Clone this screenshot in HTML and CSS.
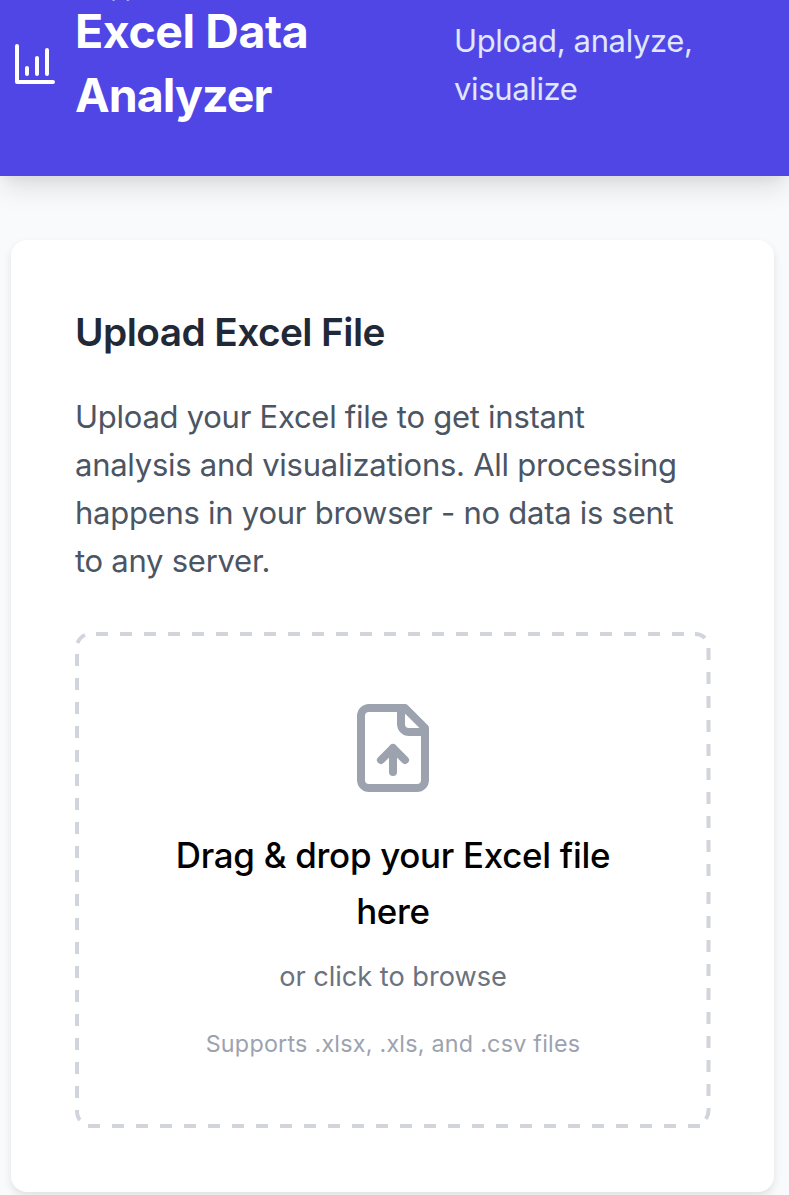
FILE: index.html
```html
<!DOCTYPE html>
<html lang="en">
<head>
<meta charset="utf-8">
<title>Excel Data Analyzer</title>
<link rel="stylesheet" href="styles.css">
</head>
<body>
<header class="header">
  <div class="status">App</div>
  <div class="brand">
    <svg class="brand-icon" viewBox="0 0 24 24"><path d="M3 3v18h18M8 17v-3M13 17V9M18 17V5"/></svg>
    <h1 class="brand-title"><span>Excel Data</span><br><span class="brand-tight">Analyzer</span></h1>
  </div>
  <p class="tagline"><span>Upload, analyze,</span><br><span>visualize</span></p>
</header>
<main class="card">
  <h2 class="card-title"><span>Upload Excel File</span></h2>
  <p class="card-text"><span>Upload your Excel file to get instant</span><br><span>analysis and visualizations. All processing</span><br><span>happens in your browser - no data is sent</span><br><span>to any server.</span></p>
  <section class="dropzone">
    <svg class="outline" viewBox="0 0 636 496">
      <path class="dash" d="M21 2H610"/>
      <path class="dash" d="M633.5 16V244M633.5 260V465"/>
      <path class="dash" d="M13 494H625"/>
      <path class="dash" d="M2 22V467"/>
      <path d="M2.5 11Q5 5 10 3M620 2Q626 2 630 6M633.5 476Q634 482 631 487M2 478Q2 485 5 488"/>
    </svg>
    <svg class="file-icon" viewBox="0 0 24 24"><path d="M15 2H6a2 2 0 0 0-2 2v16a2 2 0 0 0 2 2h12a2 2 0 0 0 2-2V7ZM14 2v4a2 2 0 0 0 2 2h4M12 12v6M15 15l-3-3-3 3"/></svg>
    <p class="drop-title"><span>Drag &amp; drop your Excel file</span><br><span>here</span></p>
    <p class="browse"><span>or click to browse</span></p>
    <p class="formats"><span>Supports .xlsx, .xls, and .csv files</span></p>
  </section>
</main>
</body>
</html>
```
FILE: styles.css
```css
* { box-sizing: border-box; margin: 0; padding: 0; }
body { height: 1195px; overflow: hidden; background: #f9fafb; font-family: Inter, "Liberation Sans", sans-serif; }
.header { position: relative; height: 176px; display: flex; background: #4f46e5; color: #fff; box-shadow: 0 16px 24px -3px rgba(0,0,0,.1), 0 6px 12px -4px rgba(0,0,0,.06); }
.status { position: absolute; left: 95px; top: -26px; font-size: 23px; line-height: 29px; }
.brand { display: flex; width: 454px; padding-left: 11px; }
.brand-icon { width: 48px; height: 48px; margin-top: 40px; fill: none; stroke: #fff; stroke-width: 2; stroke-linecap: round; stroke-linejoin: round; }
.brand-title { margin: -1px 0 0 16px; font-size: 46.5px; line-height: 64px; font-weight: 700; letter-spacing: -.45px; }
.brand-tight { letter-spacing: -.95px; }
.tagline { padding-top: 17px; font-size: 31px; line-height: 48px; letter-spacing: -.36px; color: #e0e7ff; }
.card { width: 763px; height: 952px; margin: 64px 0 0 11px; padding: 64px 63px 64px 64px; background: #fff; border-radius: 16px; box-shadow: 0 4px 8px rgba(0,0,0,.1); }
.card-title { font-size: 38.8px; line-height: 56px; font-weight: 600; color: #1f2937; letter-spacing: -.56px; }
.card-text { margin-top: 33px; font-size: 31px; line-height: 48px; letter-spacing: -.26px; color: #4b5563; }
.dropzone { position: relative; height: 496px; margin-top: 47px; padding-top: 68px; display: flex; flex-direction: column; align-items: center; text-align: center; }
.outline { position: absolute; left: 0; top: 0; width: 636px; height: 496px; fill: none; stroke: #d1d5db; stroke-width: 4; }
.dash { stroke-dasharray: 12 12; }
.file-icon { width: 96px; height: 96px; fill: none; stroke: #9ca3af; stroke-width: 2; stroke-linecap: round; stroke-linejoin: round; }
.drop-title { margin-top: 31px; font-size: 34.9px; line-height: 56px; letter-spacing: -.28px; font-weight: 500; color: #000; }
.browse { margin-top: 18px; font-size: 27.2px; line-height: 40px; letter-spacing: -.04px; color: #6b7280; }
.formats { margin-top: 31px; font-size: 23.3px; line-height: 32px; letter-spacing: .24px; color: #9ca3af; }
```
